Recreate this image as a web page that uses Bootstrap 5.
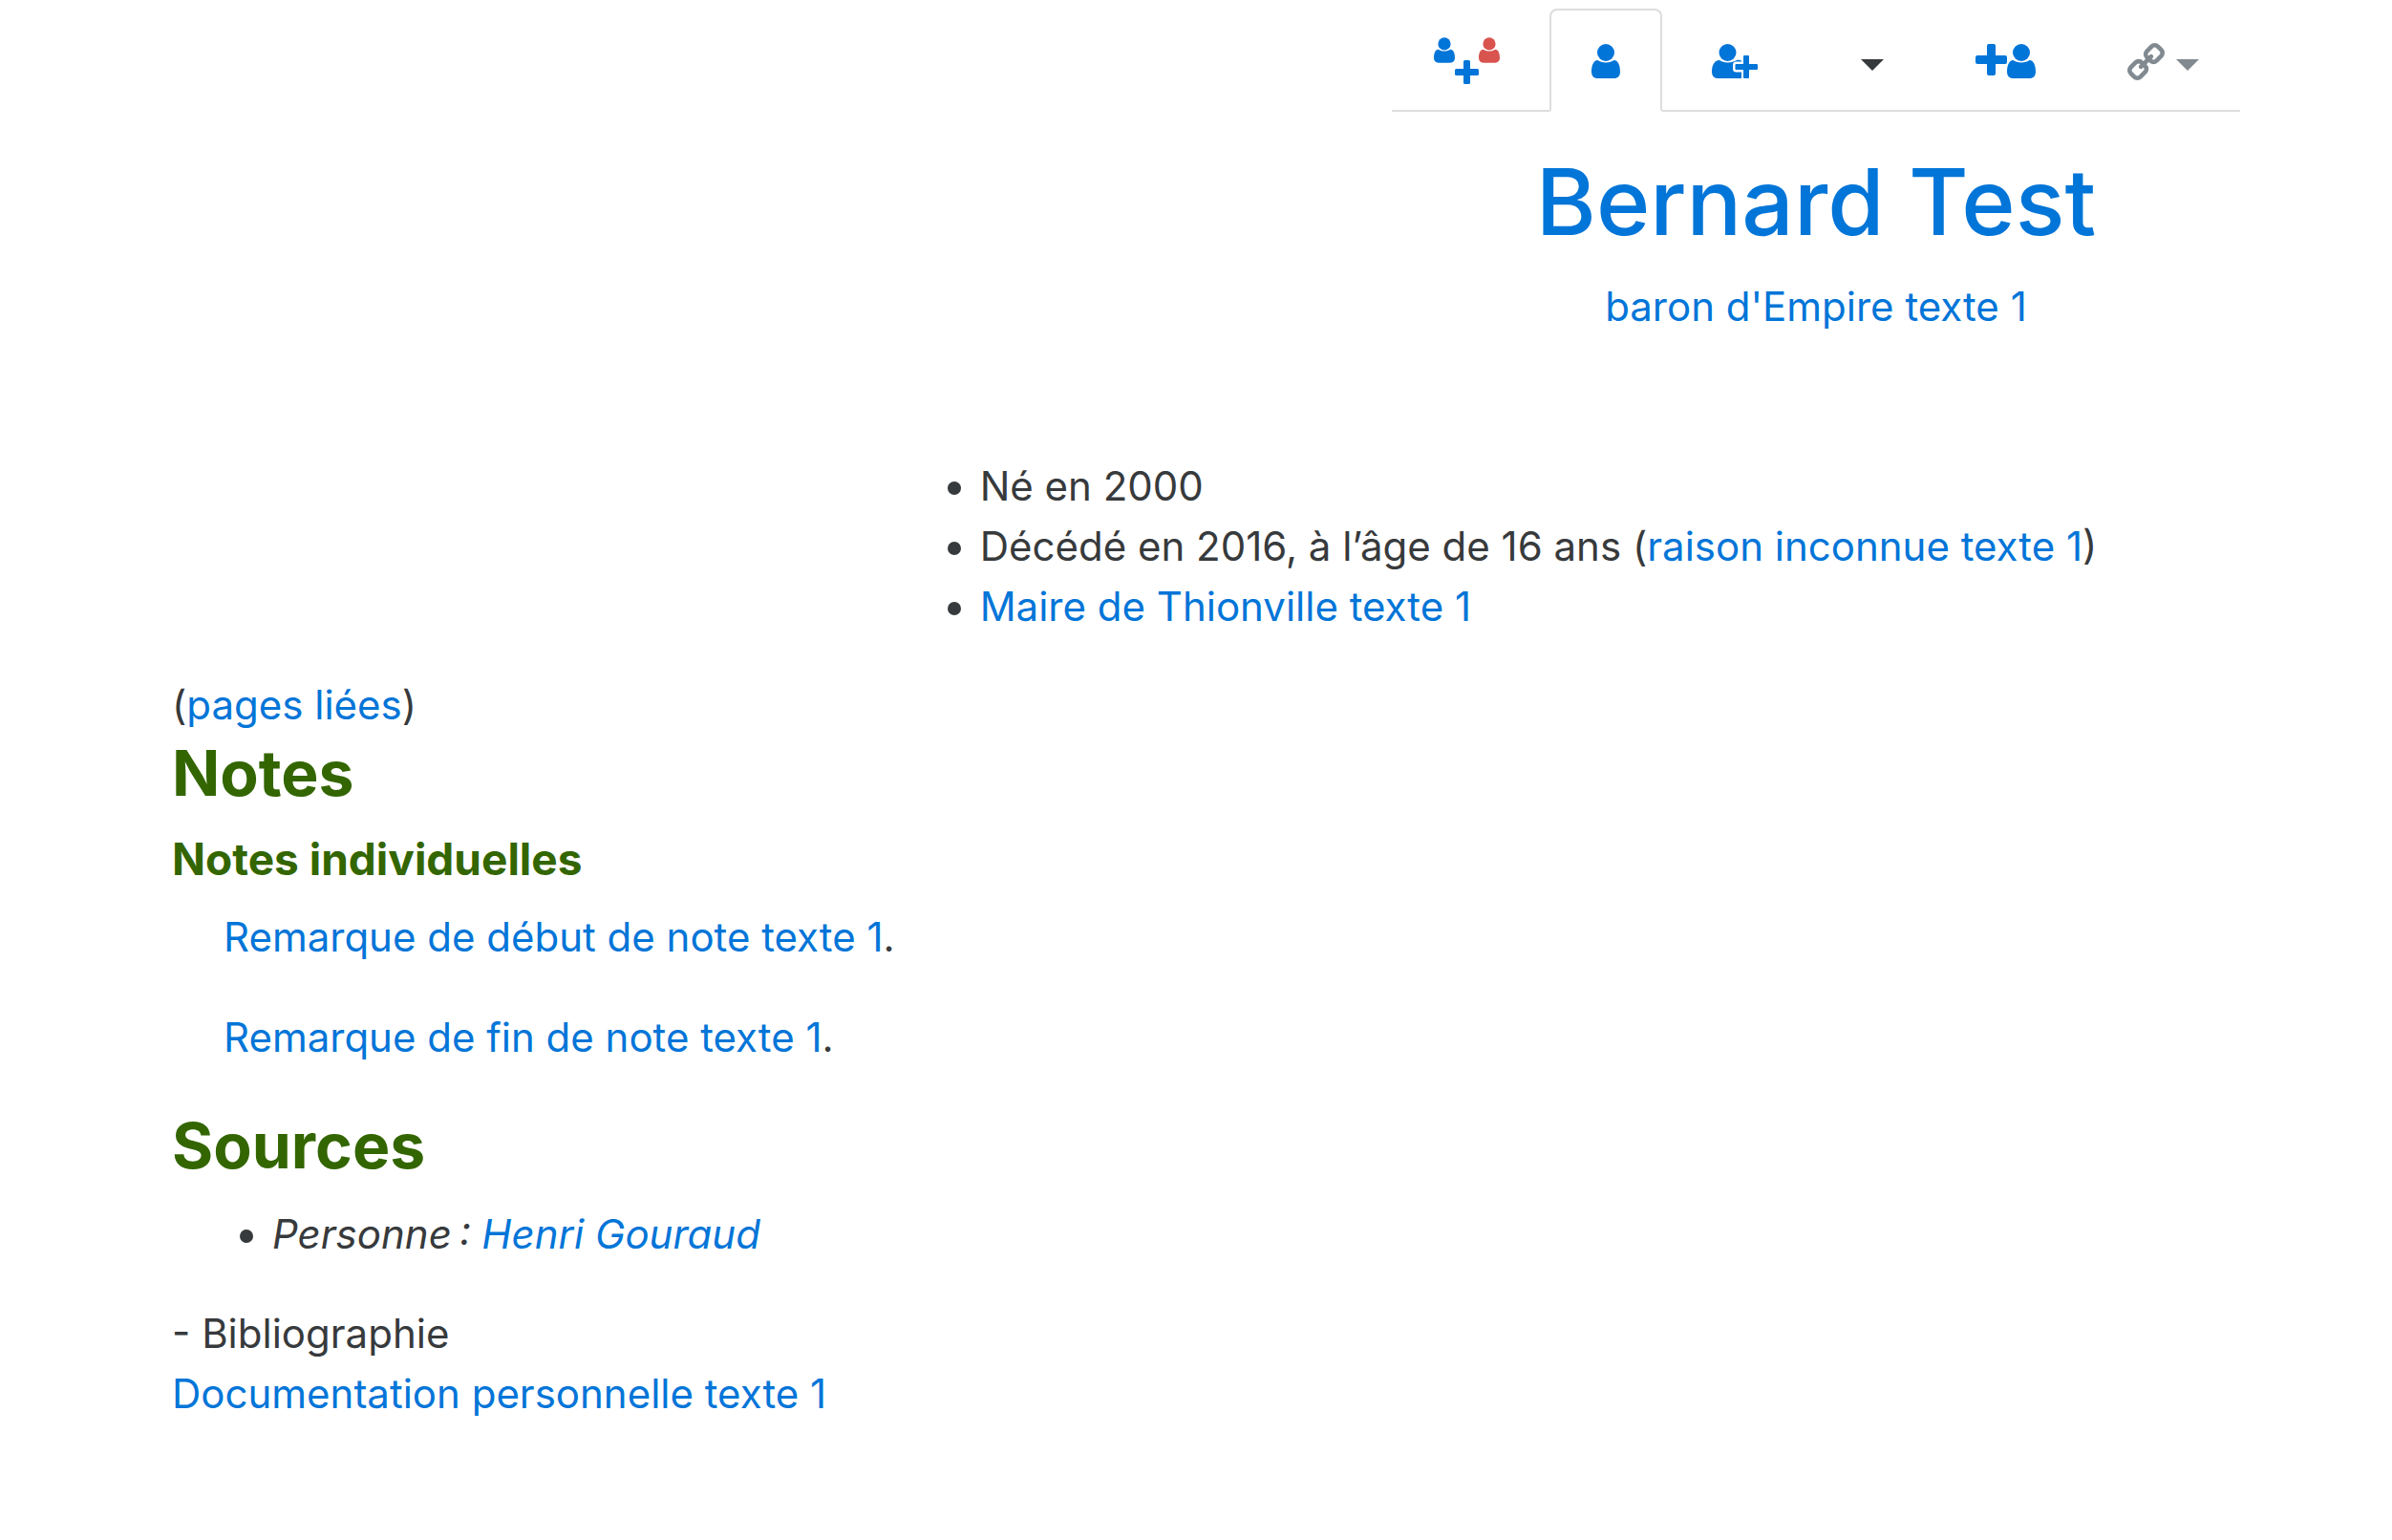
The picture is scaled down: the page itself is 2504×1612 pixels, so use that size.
<!DOCTYPE html>
<html lang="fr">
<head>
<meta charset="utf-8">
<meta name="viewport" content="width=device-width, initial-scale=1">
<title>Bernard Test</title>
<link href="https://cdn.jsdelivr.net/npm/bootstrap@5.3.0/dist/css/bootstrap.min.css" rel="stylesheet">
<style>
body { font: 400 42px/63px Inter, "Liberation Sans", sans-serif; color: #373a3c; background: #fff; }
a { color: #0275d8; text-decoration: none; }
a:hover { text-decoration: underline; }
.page { padding: 9px 159px 42px 180px; }
.person-tabs { gap: 8px; border-bottom: 2px solid #ddd; }
.person-tabs .nav-link { display: flex; align-items: center; height: 108px; padding: 2px 42px 0; margin-bottom: -2px; border: 2px solid transparent; border-radius: 8px 8px 0 0; color: #0275d8; }
.person-tabs .nav-link.active { color: #0275d8; background: #fff; border-color: #ddd #ddd #fff; }
.person-tabs .dropdown-toggle::after { margin: 8px 0 0 12px; border-top: 12px solid; border-right: 12px solid transparent; border-left: 12px solid transparent; }
.person-tabs .toggle-dark { color: #373a3c; }
.person-tabs .toggle-muted { color: #818a91; }
.person-name { margin: 37px 0 20px; font-size: 96px; line-height: 115px; font-weight: 500; }
.person-facts { margin: 125px 0 40px; padding-left: 116px; }
.section-title { margin: 0 0 20px; font-size: 66px; line-height: 81px; font-weight: 700; color: #360; }
.subsection-title { margin: 0 0 20px; font-size: 46px; line-height: 59px; font-weight: 700; color: #360; }
.note-text { margin: 0 0 42px; padding-left: 54px; }
.source-list { margin: 0 0 41px; padding-left: 105px; }
</style>
<script src="https://cdn.jsdelivr.net/npm/bootstrap@5.3.0/dist/js/bootstrap.bundle.min.js"></script>
</head>
<body>
<svg class="d-none" aria-hidden="true">
  <symbol id="user" viewBox="0 0 30 36"><circle cx="15" cy="9" r="9"/><path d="M6.5 17C2 17 0 23 0 29c0 4.500 2.500 7 6.500 7h17c4 0 6.500-2.500 6.500-7 0-6-2-12-6.500-12-2 1.500-5 2.500-8.500 2.500S8.500 18.500 6.500 17z"/></symbol>
</svg>
<main class="page container-fluid">
  <div class="row">
    <header class="col-5 offset-7 text-center">
      <ul class="nav nav-tabs person-tabs flex-nowrap">
        <li class="nav-item"><a class="nav-link" href="#" aria-label="Ajouter une famille">
          <svg width="69" height="50" fill="currentColor"><use href="#user" x="0" y="0" width="22" height="27"/><use href="#user" x="47" y="0" width="22" height="27" fill="#d9534f"/><rect x="31" y="24" width="7" height="25" rx="1.500"/><rect x="22" y="33" width="25" height="7" rx="1.500"/></svg></a></li>
        <li class="nav-item"><a class="nav-link active" href="#" aria-current="page" aria-label="Personne">
          <svg width="30" height="36" fill="currentColor"><use href="#user" width="30" height="36"/></svg></a></li>
        <li class="nav-item"><a class="nav-link" href="#" aria-label="Ajouter une personne">
          <svg width="48" height="36" fill="currentColor"><circle cx="16.500" cy="9" r="9"/><path d="M8 17C2.500 17 0 23 0 29c0 4.500 2.500 7 6.500 7H31V17.500c-1.500-.7-3-1-5-.5-2.500 1.500-5.500 2.500-9.500 2.500S10.500 18.500 8 17z"/><rect x="24.500" y="21" width="24" height="6" rx="1" stroke="#fff" stroke-width="5"/><rect x="33" y="12" width="6" height="24" rx="1" stroke="#fff" stroke-width="4"/><rect x="33" y="12" width="6" height="24" rx="1"/><rect x="24.500" y="21" width="23.500" height="6" rx="1"/></svg></a></li>
        <li class="nav-item dropdown"><button class="nav-link dropdown-toggle toggle-dark" type="button" data-bs-toggle="dropdown" aria-label="Options"></button></li>
        <li class="nav-item"><a class="nav-link" href="#" aria-label="Ajouter un parent">
          <svg width="63" height="36" fill="currentColor"><rect x="12" y="0" width="9" height="33" rx="2"/><rect x="0" y="12" width="33" height="9" rx="2"/><use href="#user" x="33" width="30" height="36"/></svg></a></li>
        <li class="nav-item dropdown"><button class="nav-link dropdown-toggle toggle-muted" type="button" data-bs-toggle="dropdown" aria-label="Liens">
          <svg width="39" height="39" viewBox="16 16 1632 1632" fill="currentColor"><path transform="matrix(-1 0 0 1 1664 0)" d="M1456 1216q0-40-28-68l-208-208q-28-28-68-28-42 0-72 32 3 3 19 18.500t21.500 21.500 15 19 13 25.500 3.500 27.500q0 40-28 68t-68 28q-15 0-27.500-3.500t-25.500-13-19-15-21.500-21.500-18.500-19q-33 31-33 73 0 40 28 68l206 207q27 27 68 27 40 0 68-26l147-146q28-28 28-67zm-703-705q0-40-28-68l-206-207q-28-28-68-28-39 0-68 27l-147 146q-28 28-28 67 0 40 28 68l208 208q27 27 68 27 42 0 72-31-3-3-19-18.500t-21.500-21.500-15-19-13-25.500-3.500-27.500q0-40 28-68t68-28q15 0 27.500 3.500t25.500 13 19 15 21.500 21.500 18.500 19q33-31 33-73zm895 705q0 120-85 203l-147 146q-83 83-203 83-121 0-204-85l-206-207q-83-83-83-203 0-123 88-209l-88-88q-86 88-208 88-120 0-204-84l-208-208q-84-84-84-204t85-203l147-146q83-83 203-83 121 0 204 85l206 207q83 83 83 203 0 123-88 209l88 88q86-88 208-88 120 0 204 84l208 208q84 84 84 204z"/></svg></button></li>
      </ul>
      <h1 class="person-name"><a href="#">Bernard Test</a></h1>
      <div><a href="#">baron d'Empire texte 1</a></div>
    </header>
  </div>
  <div class="row">
    <div class="col-8 offset-4">
      <ul class="person-facts">
        <li>Né en 2000</li>
        <li>Décédé en 2016, à l’âge de 16 ans (<a href="#">raison inconnue texte 1</a>)</li>
        <li><a href="#">Maire de Thionville texte 1</a></li>
      </ul>
    </div>
  </div>
  <div class="row">
    <div class="col-12">
      <div>(<a href="#">pages liées</a>)</div>
      <section>
        <h2 class="section-title">Notes</h2>
        <h3 class="subsection-title">Notes individuelles</h3>
        <p class="note-text"><a href="#">Remarque de début de note texte 1</a>.</p>
        <p class="note-text"><a href="#">Remarque de fin de note texte 1</a>.</p>
      </section>
      <section>
        <h2 class="section-title">Sources</h2>
        <ul class="source-list">
          <li><em>Personne&#8239;: <a href="#">Henri Gouraud</a></em></li>
        </ul>
        <div>- Bibliographie</div>
        <div><a href="#">Documentation personnelle texte 1</a></div>
      </section>
    </div>
  </div>
</main>
</body>
</html>
